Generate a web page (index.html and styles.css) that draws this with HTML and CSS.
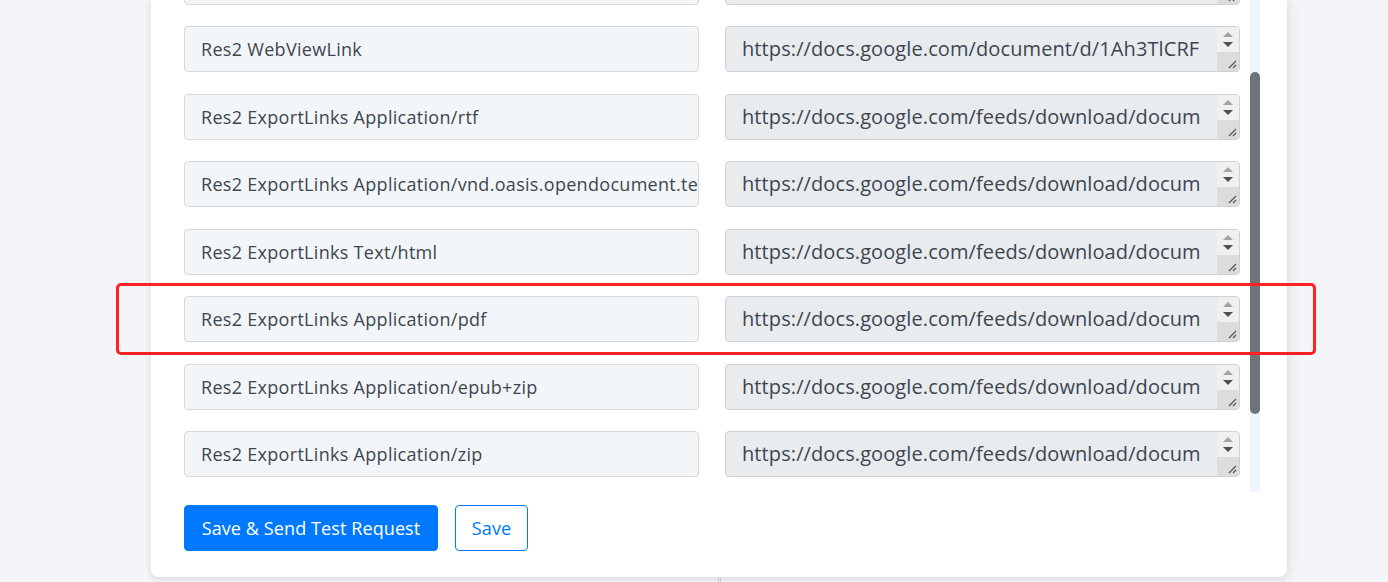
FILE: index.html
```html
<!DOCTYPE html>
<html lang="en">
<head>
<meta charset="utf-8">
<title>Field mapping</title>
<link rel="stylesheet" href="styles.css">
</head>
<body>
<div class="page">
  <div class="card">
    <div class="scroller">
      <div class="rows">
        <div class="row">
          <div class="field"></div>
          <div class="value"><span class="value-text"></span><div class="spin"><div class="arrows"><i class="up"></i><i class="down"></i></div><div class="grip"><svg width="10" height="10" viewBox="0 0 10 10"><path d="M9 2 L2 9 M9 6 L6 9" stroke="#555" stroke-width="1.2"/></svg></div></div></div>
        </div>
        <div class="row">
          <div class="field">Res2 WebViewLink</div>
          <div class="value"><span class="value-text">https://docs.google.com/document/d/1Ah3TlCRF</span><div class="spin"><div class="arrows"><i class="up"></i><i class="down"></i></div><div class="grip"><svg width="10" height="10" viewBox="0 0 10 10"><path d="M9 2 L2 9 M9 6 L6 9" stroke="#555" stroke-width="1.2"/></svg></div></div></div>
        </div>
        <div class="row">
          <div class="field">Res2 ExportLinks Application/rtf</div>
          <div class="value"><span class="value-text">https://docs.google.com/feeds/download/docum</span><div class="spin"><div class="arrows"><i class="up"></i><i class="down"></i></div><div class="grip"><svg width="10" height="10" viewBox="0 0 10 10"><path d="M9 2 L2 9 M9 6 L6 9" stroke="#555" stroke-width="1.2"/></svg></div></div></div>
        </div>
        <div class="row">
          <div class="field">Res2 ExportLinks Application/vnd.oasis.opendocument.text</div>
          <div class="value"><span class="value-text">https://docs.google.com/feeds/download/docum</span><div class="spin"><div class="arrows"><i class="up"></i><i class="down"></i></div><div class="grip"><svg width="10" height="10" viewBox="0 0 10 10"><path d="M9 2 L2 9 M9 6 L6 9" stroke="#555" stroke-width="1.2"/></svg></div></div></div>
        </div>
        <div class="row">
          <div class="field">Res2 ExportLinks Text/html</div>
          <div class="value"><span class="value-text">https://docs.google.com/feeds/download/docum</span><div class="spin"><div class="arrows"><i class="up"></i><i class="down"></i></div><div class="grip"><svg width="10" height="10" viewBox="0 0 10 10"><path d="M9 2 L2 9 M9 6 L6 9" stroke="#555" stroke-width="1.2"/></svg></div></div></div>
        </div>
        <div class="row">
          <div class="field">Res2 ExportLinks Application/pdf</div>
          <div class="value"><span class="value-text">https://docs.google.com/feeds/download/docum</span><div class="spin"><div class="arrows"><i class="up"></i><i class="down"></i></div><div class="grip"><svg width="10" height="10" viewBox="0 0 10 10"><path d="M9 2 L2 9 M9 6 L6 9" stroke="#555" stroke-width="1.2"/></svg></div></div></div>
        </div>
        <div class="row">
          <div class="field">Res2 ExportLinks Application/epub+zip</div>
          <div class="value"><span class="value-text">https://docs.google.com/feeds/download/docum</span><div class="spin"><div class="arrows"><i class="up"></i><i class="down"></i></div><div class="grip"><svg width="10" height="10" viewBox="0 0 10 10"><path d="M9 2 L2 9 M9 6 L6 9" stroke="#555" stroke-width="1.2"/></svg></div></div></div>
        </div>
        <div class="row">
          <div class="field">Res2 ExportLinks Application/zip</div>
          <div class="value"><span class="value-text">https://docs.google.com/feeds/download/docum</span><div class="spin"><div class="arrows"><i class="up"></i><i class="down"></i></div><div class="grip"><svg width="10" height="10" viewBox="0 0 10 10"><path d="M9 2 L2 9 M9 6 L6 9" stroke="#555" stroke-width="1.2"/></svg></div></div></div>
        </div>
      </div>
      <div class="track"><div class="thumb"></div></div>
    </div>
    <div class="actions">
      <button class="btn btn-primary">Save &amp; Send Test Request</button>
      <button class="btn btn-outline">Save</button>
    </div>
  </div>
  <div class="highlight"></div>
</div>
</body>
</html>
```
FILE: styles.css
```css
html, body {
  margin: 0;
  padding: 0;
}
body {
  width: 1388px;
  height: 582px;
  overflow: hidden;
  background: #f3f5f8;
  font-family: "Open Sans", Lato, sans-serif;
  color: #3d4650;
}
.page {
  position: relative;
  height: 582px;
  background:
    linear-gradient(90deg, transparent 718px, #d3d8de 718px, #d3d8de 719px, transparent 719px, transparent 720px, #d3d8de 720px, #d3d8de 721px, transparent 721px);
}
.card {
  position: relative;
  margin-left: 151px;
  width: 1136px;
  height: 577px;
  background: #fff;
  border-radius: 0 0 8px 8px;
  box-shadow: 0 2px 6px rgba(60, 70, 90, 0.12), 4px 0 14px rgba(60, 70, 90, 0.05);
  display: flex;
  flex-direction: column;
}
.scroller {
  height: 492px;
  overflow: hidden;
  display: flex;
  padding-left: 33px;
  gap: 10px;
}
.rows {
  width: 1056px;
  display: flex;
  flex-direction: column;
  gap: 21.5px;
  margin-top: -41.5px;
}
.row {
  display: grid;
  grid-template-columns: 515px 515px;
  column-gap: 26px;
  height: 46px;
  flex: none;
}
.field {
  box-sizing: border-box;
  height: 46px;
  border: 1px solid #d5dadf;
  border-radius: 4px;
  background: #f3f6f9;
  padding: 0 16px;
  font-size: 18px;
  letter-spacing: 0.3px;
  line-height: 44px;
  white-space: nowrap;
  overflow: hidden;
}
.value {
  box-sizing: border-box;
  height: 46px;
  border: 1px solid #cdd2d8;
  border-radius: 4px;
  background: #e9ecef;
  display: flex;
  overflow: hidden;
}
.value-text {
  flex: 1;
  padding-left: 16px;
  font-size: 20px;
  letter-spacing: 0.1px;
  line-height: 44px;
  white-space: nowrap;
  overflow: hidden;
}
.spin {
  width: 22px;
  flex: none;
  display: flex;
  flex-direction: column;
}
.arrows {
  height: 25px;
  background: #f0f0f0;
  display: flex;
  flex-direction: column;
  align-items: center;
  justify-content: center;
  gap: 5px;
}
.arrows i {
  display: block;
  width: 0;
  height: 0;
  border-left: 5px solid transparent;
  border-right: 5px solid transparent;
}
.arrows .up {
  border-bottom: 5px solid #a3a3a3;
}
.arrows .down {
  border-top: 5px solid #505050;
}
.grip {
  flex: 1;
  background: #dcdcdc;
  display: flex;
  align-items: flex-end;
  justify-content: flex-end;
  padding: 0 2px 2px 0;
}
.grip svg {
  display: block;
}
.track {
  width: 10px;
  flex: none;
  background: #eef5fd;
  position: relative;
}
.thumb {
  position: absolute;
  left: 0;
  right: 0;
  top: 72px;
  height: 342px;
  background: #6c737b;
  border-radius: 5px;
}
.actions {
  padding: 13px 0 0 33px;
  display: flex;
  gap: 17px;
}
.btn {
  height: 46px;
  font-family: inherit;
  font-size: 18px;
  font-weight: 500;
  letter-spacing: 0.1px;
  border-radius: 4px;
  cursor: pointer;
  padding: 0 10px;
  white-space: nowrap;
}
.btn-primary {
  width: 254px;
  background: #0079ff;
  border: 1px solid #0079ff;
  color: #fff;
}
.btn-outline {
  width: 73px;
  background: #fff;
  border: 1px solid #0079ff;
  color: #0079ff;
}
.highlight {
  position: absolute;
  left: 116px;
  top: 283px;
  width: 1194px;
  height: 66px;
  border: 3px solid #ff2222;
  border-radius: 5px;
  pointer-events: none;
}
```
